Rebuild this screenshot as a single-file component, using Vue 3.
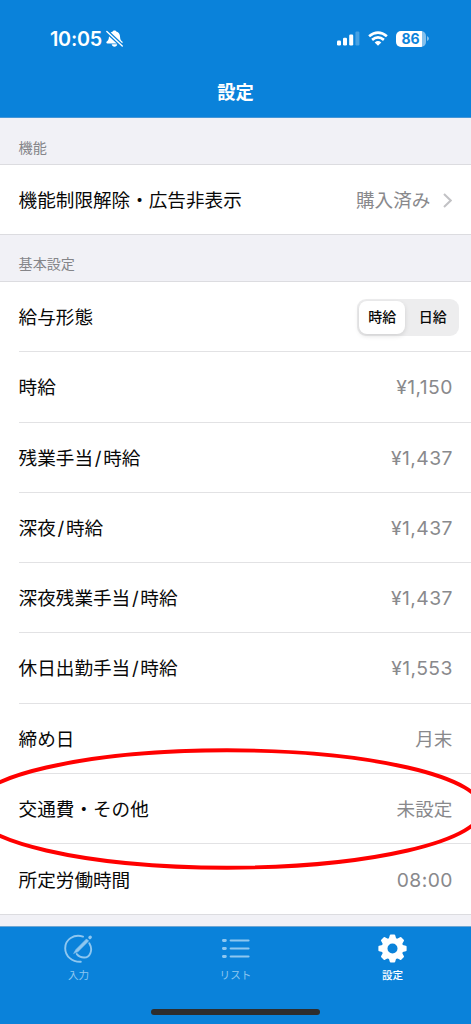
<script setup>
import { ref } from 'vue'

const payType = ref('時給')
const payTypes = ['時給', '日給']
const rows = [
  { label: ['時給'], value: '¥1,150', number: true },
  { label: ['残業手当', '時給'], value: '¥1,437', number: true },
  { label: ['深夜', '時給'], value: '¥1,437', number: true },
  { label: ['深夜残業手当', '時給'], value: '¥1,437', number: true },
  { label: ['休日出勤手当', '時給'], value: '¥1,553', number: true },
  { label: ['締め日'], value: '月末' },
  { label: ['交通費・その他'], value: '未設定' },
  { label: ['所定労働時間'], value: '08:00', number: true },
]
const teeth = [0, 45, 90, 135, 180, 225, 270, 315]
</script>

<template>
  <div class="screen">
    <header class="top">
      <div class="status">
        <div class="clock">
          <span class="time">10:05</span>
          <svg class="bell" viewBox="0 0 18 18">
            <path d="M9 .4c1.100 0 1.700.5 1.900 1.300C13.600 2.600 14.800 4.800 14.900 7.300c.1 2.500.8 3.700 2.300 5 .8.800.4 2-.7 2H1.500c-1.100 0-1.500-1.200-.7-2 1.500-1.300 2.200-2.500 2.300-5C3.200 4.800 4.400 2.600 7.100 1.700 7.300.9 7.900.4 9 .4zM6 15.200h6c-.3 1.600-1.400 2.500-3 2.500s-2.700-.9-3-2.500z" fill="#fff" />
            <path d="M.4 1.100L17.800 17.400" stroke="#0a82da" stroke-width="4.200" />
            <path d="M.9 1.600L17.200 16.900" stroke="#fff" stroke-width="1.500" stroke-linecap="round" />
          </svg>
        </div>
        <div class="indicators">
          <svg class="signal" viewBox="0 0 23 15">
            <rect x="0" y="9.500" width="4" height="5" rx="1.200" />
            <rect x="6" y="6.800" width="4" height="7.700" rx="1.200" />
            <rect x="12.200" y="3.500" width="4" height="11" rx="1.200" />
            <rect x="18.400" y="0.500" width="4" height="14" rx="1.200" opacity=".25" />
          </svg>
          <svg class="wifi" viewBox="0 0 20 15">
            <g fill="none" stroke="#fff" stroke-width="2.700">
              <path d="M1.100 5.300Q10-2.100 18.900 5.300" />
              <path d="M4.100 8.900Q10 4 15.900 8.900" />
            </g>
            <path d="M6.700 11.400Q10 8.600 13.300 11.400L10 14.800z" fill="#fff" />
          </svg>
          <div class="battery"><span>86</span></div>
          <svg class="cap" viewBox="0 0 2 5"><path d="M0 0Q2 1 2 2.500T0 5z" fill="#fff" opacity=".5" /></svg>
        </div>
      </div>
      <h1>設定</h1>
    </header>

    <main>
      <h2>機能</h2>
      <div class="row full">
        <span>機能制限解除・広告非表示</span>
        <div class="value linked">
          購入済み
          <svg class="chevron" viewBox="0 0 9 15"><path d="M1 1l6.700 6.500L1 14" fill="none" stroke="#c2c2c5" stroke-width="2" /></svg>
        </div>
      </div>
      <h2>基本設定</h2>
      <section class="list">
        <div class="row pay">
          <span>給与形態</span>
          <div class="segments">
            <button v-for="p in payTypes" :key="p" :class="{ active: p === payType }" @click="payType = p">{{ p }}</button>
          </div>
        </div>
        <div v-for="(row, i) in rows" :key="i" class="row">
          <span>{{ row.label[0] }}<template v-if="row.label[1]"><i>/</i>{{ row.label[1] }}</template></span>
          <span class="value" :class="{ number: row.number }">{{ row.value }}</span>
        </div>
        <svg class="marker" viewBox="0 0 471 130">
          <ellipse cx="227" cy="65" rx="255.500" ry="58.700" fill="none" stroke="#f00" stroke-width="3.900" />
        </svg>
      </section>
    </main>

    <nav>
      <div class="tab">
        <svg viewBox="0 0 29 29" fill="none" stroke="currentColor" stroke-linecap="round">
          <path d="M19 2.600C10-.4 1.200 5.500 1.200 14.200c0 8 7 14 15.600 13.600" stroke-width="1.900" />
          <path d="M25.300 9.200c4.200 7 .5 14.500-5.300 14.300-3 0-5.500-1.300-7.200-3.400" stroke-width="1.900" />
          <path d="M9.800 19.200L12 15.400 22.500 4.900 24.600 7 14.100 17.500z" fill="currentColor" stroke-width=".6" stroke-linejoin="round" />
          <path d="M25.900 3.500L26.300 3.100" stroke-width="3.200" />
        </svg>
        <span>入力</span>
      </div>
      <div class="tab">
        <svg viewBox="0 0 29 29" fill="none" stroke="currentColor" stroke-linecap="round">
          <path d="M2.400 6.500h2M2.400 14.500h2M2.400 22.500h2" stroke-width="2.800" />
          <path d="M9.700 6.500h17.800M9.700 14.500h17.800M9.700 22.500h17.800" stroke-width="2.200" />
        </svg>
        <span>リスト</span>
      </div>
      <div class="tab selected">
        <svg viewBox="0 0 30 30">
          <circle cx="15" cy="15" r="8.200" fill="none" stroke="currentColor" stroke-width="6" />
          <path v-for="a in teeth" :key="a" :transform="`rotate(${a} 15 15)`" d="M11 5.500L12.200 1.200Q12.400.4 13.200.4H16.800Q17.600.4 17.800 1.200L19 5.500z" fill="currentColor" />
        </svg>
        <span>設定</span>
      </div>
    </nav>
    <div class="home"></div>
  </div>
</template>

<style>
body { margin: 0; background: #f1f1f6; }
</style>

<style scoped>
* { box-sizing: border-box; }
.screen {
  position: relative;
  display: flex;
  flex-direction: column;
  width: 471px;
  height: 1024px;
  overflow: hidden;
  background: #f1f1f6;
  color: #080808;
  font-family: Inter, "Noto Sans CJK JP", sans-serif;
  font-size: 18.6px;
}
.top { height: 118px; flex: none; background: #0a82da; border-bottom: 1px solid #4596d7; color: #fff; }
.status { display: flex; justify-content: space-between; height: 77px; padding: 0 42px 0 50px; align-items: center; }
.clock, .indicators { display: flex; align-items: center; }
.time { font-size: 19.800px; font-weight: 600; letter-spacing: -.25px; }
.bell { width: 17px; height: 17px; margin-left: 4px; }
.signal { width: 23px; height: 15px; fill: #fff; }
.wifi { width: 20px; height: 15px; margin-left: 8px; }
.battery {
  display: flex;
  align-items: center;
  justify-content: center;
  width: 30px;
  height: 16px;
  margin-left: 8px;
  border-radius: 5px;
  background: linear-gradient(90deg, #fff 86%, #84c0ec 86%);
  color: #0a82da;
  font-size: 14px;
  font-weight: 700;
}
.battery span { margin-left: -1px; }
.cap { width: 2px; height: 5px; margin-left: 1px; }
h1 { margin: 0; text-align: center; font-size: 18.3px; line-height: 30px; font-weight: 700; }
h2 { margin: 0; height: 46.3px; padding: 17.5px 18.6px 0; color: #858589; font-size: 14.1px; line-height: 23px; font-weight: 400; }
.row {
  display: flex;
  align-items: center;
  justify-content: space-between;
  height: 70.28px;
  margin-left: 18.6px;
  padding: 1px 18.6px 0 0;
  border-bottom: 1px solid #e2e2e4;
  line-height: 28px;
  white-space: nowrap;
}
.row i { display: inline-block; width: 10.2px; text-align: center; font-style: normal; }
.row.full { margin-left: 0; padding-left: 18.6px; background: #fff; border-top: 1px solid #dcdce0; border-bottom-color: #dcdce0; height: 70.7px; }
.value { color: #89898c; }
.number { font-size: 19.3px; letter-spacing: .45px; margin-right: -.5px; }
.linked { display: flex; align-items: center; }
.chevron { width: 9px; height: 15px; margin-left: 13px; }
.list { position: relative; height: 633.5px; background: #fff; border-top: 1px solid #dcdce0; border-bottom: 1px solid #dcdce0; }
.row:nth-last-child(2) { border-bottom: 0; }
.row.pay { height: 70px; padding-right: 11.7px; }
.segments { display: flex; gap: 3px; width: 102px; height: 37px; padding: 2px; border-radius: 9px; background: #ededee; }
button { flex: 1; border: 0; border-radius: 8px; padding: 0; background: none; color: #080808; font: 500 14px/28px Inter, "Noto Sans CJK JP", sans-serif; }
button.active { flex: 0 0 46px; background: #fff; box-shadow: 0 2px 5px rgba(0, 0, 0, .12); }
.marker { position: absolute; left: 0; bottom: 40px; width: 471px; height: 130px; pointer-events: none; }
nav {
  display: flex;
  flex: none;
  height: 98px;
  margin-top: auto;
  background: #0a82da;
  border-top: 1px solid #6fa7d3;
}
.tab { flex: 1; display: flex; flex-direction: column; align-items: center; padding-top: 7px; color: #8ec7f0; font-size: 10.600px; line-height: 16px; }
.tab svg { width: 29px; height: 29px; margin-bottom: 5px; }
.tab.selected { color: #fff; font-weight: 500; }
.home { position: absolute; left: 151px; bottom: 9px; width: 169px; height: 6px; border-radius: 3px; background: #2d2d2e; }
</style>
